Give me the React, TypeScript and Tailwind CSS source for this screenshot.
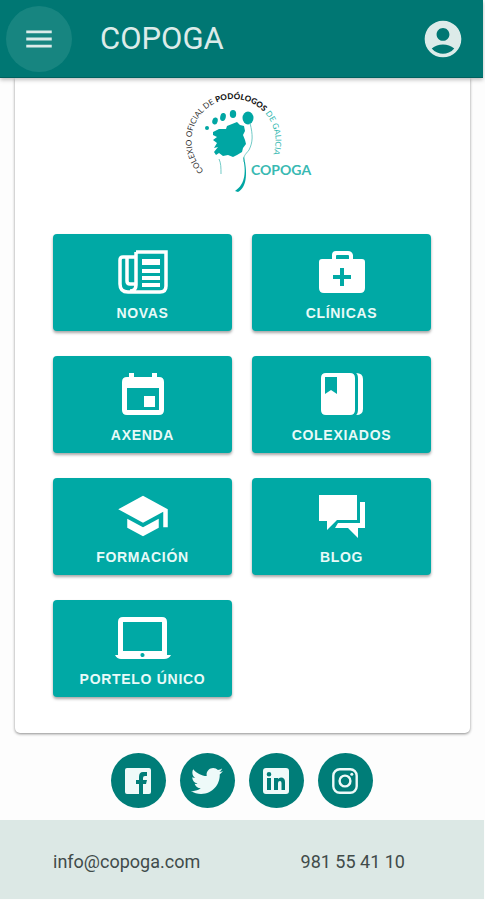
import React from "react";
import { MdAccountCircle, MdMenu, MdSchool } from "react-icons/md";
import { FaTwitter } from "react-icons/fa";

function Logo() {
  return (
    <svg viewBox="0 0 136 106" className="h-[106px] w-[136px]" role="img" aria-label="COPOGA">
      <defs>
        <path id="logo-arc" d="M21.800 80.700 A42 42 0 1 1 87.900 72" fill="none" />
      </defs>
      <text fontFamily="Lato, sans-serif" fontSize="8" fill="#333">
        <textPath href="#logo-arc">
          <tspan>COLEXIO OFICIAL DE </tspan>
          <tspan fontWeight="900" fill="#111">PODÓLOGOS</tspan>
          <tspan fill="#2bb5ae"> DE GALICIA</tspan>
        </textPath>
      </text>
      <g fill="#00a6a3">
        <circle cx="25" cy="38" r="2" />
        <ellipse cx="33" cy="31" rx="2.700" ry="3.500" transform="rotate(15 33 31)" />
        <ellipse cx="41" cy="27" rx="2.800" ry="4" transform="rotate(12 41 27)" />
        <ellipse cx="51" cy="24" rx="3.200" ry="4" />
        <ellipse cx="66" cy="28" rx="5.500" ry="6.500" />
        <path d="M31 42 L37 39 L44 39 L45 36 L50 34 L55 32 L58 35 L62 36 L63 41 L61 45 L63 50 L64 54 L61 58 L60 62 L55 65 L51 67 L46 65 L41 66 L37 63 L34 65 L32 62 L36 57 L32 58 L35 53 L31 50 L35 47 L31 45 Z" />
        <path d="M61 68 C64 80 64 94 53 101 L56 102 C66 97 65 80 62 67 Z" />
      </g>
      <path d="M68 33 C71 45 71 52 67 60 C63 65 61 66 62 72 M37 69 C39 73 39 78 39 84" fill="none" stroke="#72cbc7" />
      <text x="69" y="85" fontFamily="Lato, sans-serif" fontSize="14" fontWeight="700" fill="#39b9b3">COPOGA</text>
    </svg>
  );
}

function NewsIcon() {
  return (
    <svg viewBox="0 0 50 44" className="h-11 w-[50px]" fill="none" stroke="currentColor" strokeWidth="3.500">
      <path d="M18 2H48V36Q48 42 42 42H10Q2 42 2 34V10Q2 7 5 7H18" />
      <path d="M18 2V35Q18 41 12 41M9 8V31Q9 34 12 34H17" />
      <path d="M24 12H42" strokeWidth="6" />
      <path d="M24 21H42M24 28H42M24 35H42" strokeWidth="4" />
    </svg>
  );
}

function ClinicIcon() {
  return (
    <svg viewBox="0 0 46 44" className="h-11 w-[46px]" fill="currentColor" fillRule="evenodd">
      <path d="M13 9V5Q13 1 17 1H29Q33 1 34 5V9H43Q46 9 46 12V38Q46 43 41 43H5Q0 43 0 38V12Q0 9 3 9ZM17 9H30V6Q30 5 29 5H18Q17 5 17 6ZM21 18V25H14V29H21V36H25V29H32V25H25V18Z" />
    </svg>
  );
}

function CalendarIcon() {
  return (
    <svg viewBox="0 0 42 44" className="h-11 w-[42px]" fill="currentColor" fillRule="evenodd">
      <path d="M7 1H12V5H30V1H35V5H37Q42 5 42 10V38Q42 43 37 43H5Q0 43 0 38V10Q0 5 5 5H7ZM5 16V38H37V16Z" />
      <path d="M22 24H33V35H22Z" />
    </svg>
  );
}

function BookIcon() {
  return (
    <svg viewBox="0 0 42 44" className="h-11 w-[42px]" fill="currentColor" fillRule="evenodd">
      <path d="M5 1H29Q34 1 34 6V38Q34 43 29 43H5Q0 43 0 38V6Q0 1 5 1ZM4 5V22L10 18L16 22V5Z" />
      <path d="M35 1Q42 1 42 7V37Q42 43 35 43Q37 42 37 37V7Q37 2 35 1Z" />
    </svg>
  );
}

function ChatIcon() {
  return (
    <svg viewBox="0 0 46 44" className="h-11 w-[46px]" fill="currentColor">
      <path d="M0 1H38V26H18L8 36V27H0Z" />
      <path d="M41 8H46V34H39V44L29 34H16L19 29H41Z" />
    </svg>
  );
}

function LaptopIcon() {
  return (
    <svg viewBox="0 0 56 44" className="h-11 w-14" fill="currentColor" fillRule="evenodd">
      <path d="M8 1H47Q52 1 52 6V39H56Q54 43 49 43H6Q2 43 0 39H3V6Q3 1 8 1ZM8 6V35H47V6ZM27 37A2 2 0 1 0 28 41A2 2 0 1 0 27 37Z" />
    </svg>
  );
}

function FacebookIcon() {
  return (
    <svg viewBox="0 0 26 26" className="size-[26px]" fill="currentColor">
      <path d="M2 0H24Q26 0 26 2V24Q26 26 24 26H18V16H21L22 12H18V10Q18 8 20 8H22V4H18Q14 4 14 9V12H11V16H14V26H2Q0 26 0 24V2Q0 0 2 0Z" />
    </svg>
  );
}

function LinkedinIcon() {
  return (
    <svg viewBox="0 0 26 26" className="size-[26px]" fill="currentColor" fillRule="evenodd">
      <path d="M3 0H23Q26 0 26 3V23Q26 26 23 26H3Q0 26 0 23V3Q0 0 3 0ZM4 10V22H8V10ZM6 4A2.300 2.300 0 1 0 6 8.600A2.300 2.300 0 1 0 6 4ZM11 10V22H15V15Q15 13 17 13Q18.500 13 18.500 15V22H22V14Q22 9.500 18 9.500Q16 9.500 15 11V10Z" />
    </svg>
  );
}

function InstagramIcon() {
  return (
    <svg viewBox="0 0 26 26" className="size-[26px]" fill="none" stroke="currentColor" strokeWidth="2.400">
      <rect x="1.300" y="1.300" width="23.400" height="23.400" rx="6.500" />
      <circle cx="13" cy="13" r="5.400" />
      <circle cx="19.800" cy="6.200" r="1.500" fill="currentColor" stroke="none" />
    </svg>
  );
}

const sections = [
  { label: "NOVAS", icon: <NewsIcon /> },
  { label: "CLÍNICAS", icon: <ClinicIcon /> },
  { label: "AXENDA", icon: <CalendarIcon /> },
  { label: "COLEXIADOS", icon: <BookIcon /> },
  { label: "FORMACIÓN", icon: <MdSchool className="size-[54px]" /> },
  { label: "BLOG", icon: <ChatIcon /> },
  { label: "PORTELO ÚNICO", icon: <LaptopIcon /> },
];

const networks = [
  { name: "Facebook", icon: <FacebookIcon /> },
  { name: "Twitter", icon: <FaTwitter className="size-8" /> },
  { name: "LinkedIn", icon: <LinkedinIcon /> },
  { name: "Instagram", icon: <InstagramIcon /> },
];

export default function App() {
  return (
    <div className="flex min-h-screen flex-col bg-[#fdfdfd] font-['Roboto',sans-serif]">
      <header className="z-10 mr-0.5 flex h-[78px] items-center border-b border-[#00605e] bg-[#007773] pr-[18px] pl-1.5 text-[#dcebe9] shadow-[0_2px_4px_rgba(0,0,0,0.25)]">
        <button aria-label="Menu" className="flex size-[66px] items-center justify-center rounded-full bg-[#178580]">
          <MdMenu className="size-[34px]" />
        </button>
        <h1 className="ml-7 flex-1 text-[31px] leading-9">COPOGA</h1>
        <button aria-label="Account">
          <MdAccountCircle className="size-11" />
        </button>
      </header>

      <main>
        <section className="mx-[15px] rounded-b-[5px] bg-white pt-3 pr-[39px] pb-9 pl-[38px] shadow-[0_1px_3px_rgba(0,0,0,0.45)]">
          <div className="mb-[38px] flex justify-center pl-4">
            <Logo />
          </div>
          <nav className="grid grid-cols-2 gap-x-5 gap-y-[25px]">
            {sections.map(({ label, icon }) => (
              <button
                key={label}
                className="flex h-[97px] flex-col items-center rounded-[4px] bg-[#00a9a5] pt-[15px] text-white shadow-[0_2px_3px_rgba(0,0,0,0.35)]"
              >
                <span className="flex h-[46px] items-center justify-center">{icon}</span>
                <span className="mt-2 font-['Liberation_Sans',sans-serif] text-[14px] leading-5 font-bold tracking-wider text-[#e8faf8]">
                  {label}
                </span>
              </button>
            ))}
          </nav>
        </section>

        <div className="flex justify-center gap-3.5 pt-5 pr-0.5 pb-3">
          {networks.map(({ name, icon }) => (
            <a
              key={name}
              href="#"
              aria-label={name}
              className="flex size-[55px] items-center justify-center rounded-full bg-[#007d78] text-[#eefaf9]"
            >
              {icon}
            </a>
          ))}
        </div>
      </main>

      <footer className="mr-px flex h-[79px] items-center justify-between bg-[#dce8e5] pt-1 pr-[79px] pl-[53px] text-[18px] leading-6 text-[#414b4a]">
        <a href="mailto:info@copoga.com">info@copoga.com</a>
        <a href="tel:981554110">981 55 41 10</a>
      </footer>
    </div>
  );
}
